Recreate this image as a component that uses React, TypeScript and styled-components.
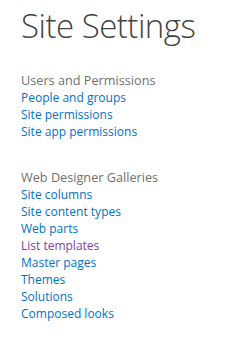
import styled, { createGlobalStyle } from "styled-components";

const GlobalStyle = createGlobalStyle`
  body {
    margin: 0;
    background: #ffffff;
    font-family: "Open Sans", "Liberation Sans", sans-serif;
  }
`;

const Page = styled.div`
  width: 242px;
  height: 344px;
  padding: 4px 0 0 21px;
  box-sizing: border-box;
`;

const Title = styled.h1`
  margin: 0;
  font-size: 33px;
  font-weight: 300;
  color: #444444;
  line-height: 44px;
  letter-spacing: -0.5px;
`;

const Section = styled.div<{ $gap: number }>`
  display: flex;
  flex-direction: column;
  margin-top: ${(p) => p.$gap}px;
`;

const SectionHeading = styled.div`
  font-size: 12.7px;
  color: #707070;
  line-height: 17px;
`;

const Link = styled.a<{ $visited?: boolean }>`
  font-size: 12px;
  line-height: 17px;
  color: ${(p) => (p.$visited ? "#7b3fa0" : "#0072c6")};
  text-decoration: none;
`;

const sections = [
  {
    title: "Users and Permissions",
    gap: 24,
    links: ["People and groups", "Site permissions", "Site app permissions"],
  },
  {
    title: "Web Designer Galleries",
    gap: 29,
    links: [
      "Site columns",
      "Site content types",
      "Web parts",
      "List templates",
      "Master pages",
      "Themes",
      "Solutions",
      "Composed looks",
    ],
  },
];

const App = () => {
  return (
    <>
      <GlobalStyle />
      <Page>
        <Title>Site Settings</Title>
        {sections.map((s) => (
          <Section key={s.title} $gap={s.gap}>
            <SectionHeading>{s.title}</SectionHeading>
            {s.links.map((l) => (
              <Link key={l} href="#" $visited={l === "List templates"}>
                {l}
              </Link>
            ))}
          </Section>
        ))}
      </Page>
    </>
  );
};

export default App;
